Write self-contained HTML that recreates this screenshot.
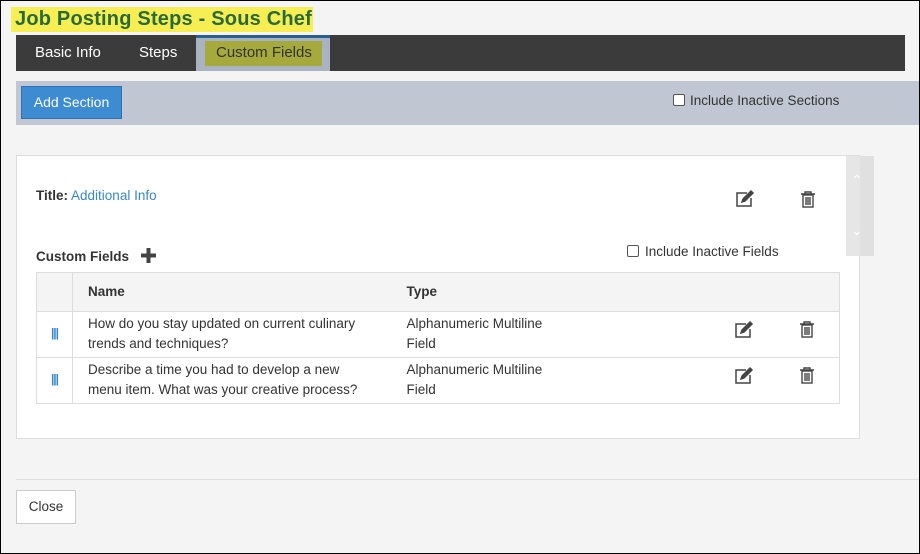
<!DOCTYPE html>
<html><head><style>
*{box-sizing:border-box;margin:0;padding:0}
body{width:920px;height:554px;background:#f5f4f5;position:relative;overflow:hidden;font-family:"Liberation Sans",sans-serif;font-size:13.5px;color:#333}
.a{position:absolute}
.cb{position:absolute;width:12px;height:12px;border:1px solid #555;border-radius:2px;background:#fff}
td,th{border-top:1px solid #ddd;border-bottom:1px solid #ddd;vertical-align:top;text-align:left}
</style></head><body>
<div class="a" style="left:0;top:0;width:920px;height:554px;border:1px solid #000;z-index:5;pointer-events:none"></div>
<div class="a" style="left:11px;top:7px;width:302px;height:25px;background:#f6ee52"></div>
<div class="a" style="left:15px;top:7px;font-size:20px;font-weight:bold;color:#2a6a3a;line-height:25px;letter-spacing:0.2px">Job Posting Steps - Sous Chef</div>
<div class="a" style="left:16px;top:35px;width:889px;height:36px;background:#3b3b3b"></div>
<div class="a" style="left:35px;top:44px;color:#fff;font-size:15px">Basic Info</div>
<div class="a" style="left:139px;top:44px;color:#fff;font-size:15px">Steps</div>
<div class="a" style="left:196px;top:35px;width:134px;height:36px;background:#aab3c2;border-top:3px solid #2a5f95"></div>
<div class="a" style="left:205px;top:41px;width:117px;height:25px;background:#a6a93b"></div>
<div class="a" style="left:216px;top:44px;color:#333;font-size:15px">Custom Fields</div>
<div class="a" style="left:16px;top:81px;width:904px;height:44px;background:#c0c7d2"></div>
<div class="a" style="left:21px;top:86px;width:101px;height:33px;background:#3d8bd0;border:1px solid #2a72b5;color:#fff;font-size:14px;line-height:31px;text-align:center">Add Section</div>
<div class="cb" style="left:673px;top:94px"></div>
<div class="a" style="left:690px;top:93px">Include Inactive Sections</div>
<div class="a" style="left:16px;top:155px;width:844px;height:284px;background:#fff;border:1px solid #ddd"></div>
<div class="a" style="left:846px;top:156px;width:14px;height:100px;background:#e6e6e6"></div>
<div class="a" style="left:860px;top:156px;width:14px;height:100px;background:#e0e0e0"></div>
<div class="a" style="left:851px;top:172px;color:#fff;font-size:14px">&#8963;</div>
<div class="a" style="left:851px;top:222px;color:#fff;font-size:14px">&#8964;</div>
<div class="a" style="left:36px;top:188px"><b>Title:</b> <span style="color:#3a87c8">Additional Info</span></div>
<div class="a" style="left:36px;top:249px;font-weight:bold">Custom Fields</div>
<svg class="a" style="left:140px;top:247px" width="17" height="17"><path d="M8.5 1v15M1 8.5h15" stroke="#444" stroke-width="4"/></svg>
<div class="cb" style="left:627px;top:245px"></div>
<div class="a" style="left:645px;top:244px">Include Inactive Fields</div>
<table class="a" style="left:36px;top:272px;width:804px;border-collapse:collapse;background:#fff;line-height:20px;border-left:1px solid #ddd;border-right:1px solid #ddd">
<tr style="background:#f4f4f4;height:39px"><th style="width:36px;border-right:1px solid #ddd"></th><th style="padding:9px 15px;width:319px">Name</th><th style="padding:9px 15px">Type</th></tr>
<tr style="height:46px"><td style="color:#3a87c8;text-align:center;padding-top:11px;font-size:12px;font-weight:bold;letter-spacing:-1px;border-right:1px solid #ddd">|||</td><td style="padding:2px 30px 2px 15px">How do you stay updated on current culinary trends and techniques?</td><td style="padding:2px 15px">Alphanumeric Multiline<br>Field</td></tr>
<tr style="height:46px"><td style="color:#3a87c8;text-align:center;padding-top:11px;font-size:12px;font-weight:bold;letter-spacing:-1px;border-right:1px solid #ddd">|||</td><td style="padding:2px 30px 2px 15px">Describe a time you had to develop a new menu item. What was your creative process?</td><td style="padding:2px 15px">Alphanumeric Multiline<br>Field</td></tr>
</table>
<svg class="a" style="left:0;top:0" width="920" height="554">
<defs>
<g id="ed" fill="none" stroke="#444" stroke-width="1.5"><path d="M12 3H2v13h14V8"/><path d="M7 12l1-3 8-8 2 2-8 8z" fill="#444"/></g>
<g id="tr" fill="none" stroke="#444" stroke-width="1.4"><path d="M1 3h14M5 3V1h6v2"/><rect x="3" y="4" width="10" height="12"/><path d="M6 6v8M8 6v8M10 6v8"/></g>
</defs>
<use href="#ed" x="735" y="190"/><use href="#tr" x="800" y="191"/>
<use href="#ed" x="734" y="321"/><use href="#tr" x="799" y="321"/>
<use href="#ed" x="734" y="367"/><use href="#tr" x="799" y="367"/>
</svg>
<div class="a" style="left:16px;top:479px;width:904px;height:1px;background:#ddd"></div>
<div class="a" style="left:16px;top:490px;width:60px;height:34px;background:#fff;border:1px solid #ccc;line-height:32px;text-align:center">Close</div>
</body></html>
